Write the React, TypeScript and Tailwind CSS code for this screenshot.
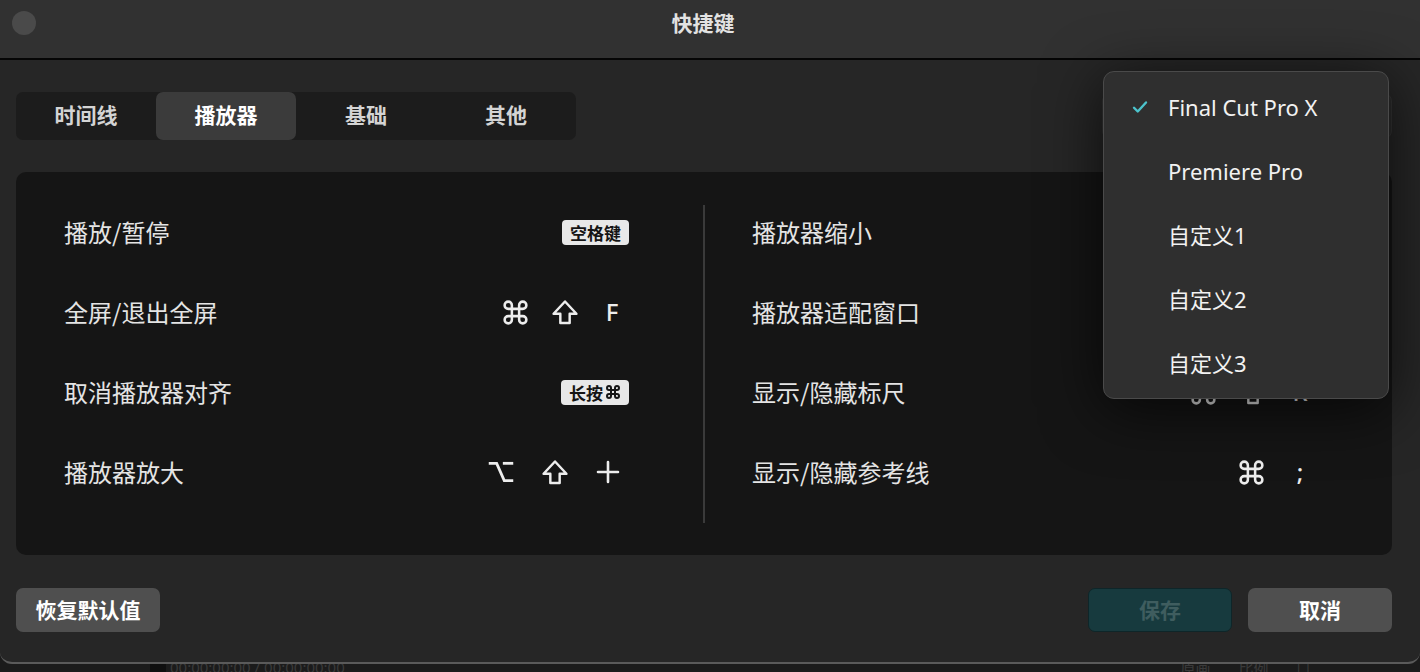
import React from "react";

const CJK = '"Noto Sans CJK SC", "Noto Sans", sans-serif';
const LAT = '"Noto Sans", "Noto Sans CJK SC", sans-serif';

function Cmd({ size = 29, sw = 2.1 }: { size?: number; sw?: number }) {
  return (
    <svg width={size} height={size} viewBox="0 0 24 24" fill="none" stroke="currentColor" strokeWidth={sw} strokeLinecap="round" strokeLinejoin="round">
      <path d="M15 6v12a3 3 0 1 0 3-3H6a3 3 0 1 0 3 3V6a3 3 0 1 0-3 3h12a3 3 0 1 0-3-3" />
    </svg>
  );
}
function Shift() {
  return (
    <svg width={28} height={28} viewBox="0 0 24 24" fill="none" stroke="currentColor" strokeWidth={2.1} strokeLinejoin="round">
      <path d="M8 21.5v-8H2.2L12 3l9.8 10.5H16v8H8z" />
    </svg>
  );
}
function Opt() {
  return (
    <svg width={26} height={26} viewBox="0 0 24 24" fill="none" stroke="currentColor" strokeWidth={2.6} strokeLinecap="square">
      <path d="M2 4h6l7 16h7" />
      <path d="M15 4h7" />
    </svg>
  );
}
function Plus() {
  return (
    <svg width={24} height={24} viewBox="0 0 24 24" fill="none" stroke="currentColor" strokeWidth={2.6} strokeLinecap="round">
      <path d="M12 2v20M2 12h20" />
    </svg>
  );
}
function Check() {
  return (
    <svg width={18} height={18} viewBox="0 0 24 24" fill="none" stroke="#4cc3cc" strokeWidth={3.2} strokeLinecap="round" strokeLinejoin="round">
      <path d="M4 13l5 5L20 6" />
    </svg>
  );
}

function KeyText({ children }: { children: React.ReactNode }) {
  return (
    <span className="text-[24px] leading-none font-medium w-[24px] text-center" style={{ fontFamily: LAT }}>
      {children}
    </span>
  );
}

function Badge({ children }: { children: React.ReactNode }) {
  return (
    <span
      className="h-[25px] px-[8px] flex items-center gap-[2px] rounded-[4px] bg-[#e8e8e8] text-[#151515] text-[17px] font-bold leading-none"
      style={{ fontFamily: CJK }}
    >
      {children}
    </span>
  );
}

type Row = { label: string; keys: React.ReactNode };

const leftRows: Row[] = [
  { label: "播放/暂停", keys: <Badge>空格键</Badge> },
  {
    label: "全屏/退出全屏",
    keys: (
      <div className="flex items-center gap-[21px] mr-[5px]">
        <Cmd />
        <Shift />
        <KeyText>F</KeyText>
      </div>
    ),
  },
  {
    label: "取消播放器对齐",
    keys: (
      <Badge>
        长按<Cmd size={16} sw={3} />
      </Badge>
    ),
  },
  {
    label: "播放器放大",
    keys: (
      <div className="flex items-center gap-[27px] mr-[9px]">
        <Opt />
        <Shift />
        <Plus />
      </div>
    ),
  },
];

const rightRows: Row[] = [
  {
    label: "播放器缩小",
    keys: (
      <div className="flex items-center gap-[24px]">
        <Opt />
        <KeyText>-</KeyText>
      </div>
    ),
  },
  {
    label: "播放器适配窗口",
    keys: (
      <div className="flex items-center gap-[22px]">
        <Shift />
        <KeyText>Z</KeyText>
      </div>
    ),
  },
  {
    label: "显示/隐藏标尺",
    keys: (
      <div className="flex items-center gap-[21px]">
        <Cmd />
        <Shift />
        <KeyText>R</KeyText>
      </div>
    ),
  },
  {
    label: "显示/隐藏参考线",
    keys: (
      <div className="flex items-center gap-[22px]">
        <Cmd />
        <KeyText>;</KeyText>
      </div>
    ),
  },
];

function Column({ rows, className }: { rows: Row[]; className: string }) {
  return (
    <div className={"flex flex-col " + className}>
      {rows.map((r) => (
        <div key={r.label} className="h-[80px] flex items-center justify-between">
          <span className="text-[24px] leading-none text-[#e4e4e4]" style={{ fontFamily: CJK }}>
            {r.label}
          </span>
          <div className="text-[#ededed] flex items-center">{r.keys}</div>
        </div>
      ))}
    </div>
  );
}

export default function App() {
  const tabs = ["时间线", "播放器", "基础", "其他"];
  const menu = ["Final Cut Pro X", "Premiere Pro", "自定义1", "自定义2", "自定义3"];
  return (
    <div className="w-[1420px] h-[672px] bg-[#1b1b1b] flex flex-col overflow-hidden relative" style={{ fontFamily: CJK }}>
      {/* Dialog */}
      <div className="h-[664px] shrink-0 flex flex-col rounded-b-[12px] border-b-[2px] border-[#5a5a5a] bg-[#262626] overflow-hidden">
        {/* Title bar */}
        <div className="h-[60px] shrink-0 bg-[#313131] border-b-[2px] border-[#050505] relative flex items-center justify-center pr-[14px]">
          <div className="absolute left-[12px] top-[11px] w-[24px] h-[24px] rounded-full bg-[#4a4a4a]" />
          <span className="text-[21px] font-bold text-[#e2e2e2] -mt-[13px]">快捷键</span>
        </div>

        {/* Body */}
        <div className="flex-1 flex flex-col pl-[16px] pr-[28px] pt-[32px]">
          <div className="flex items-center justify-between">
            <div className="flex h-[48px] rounded-[7px] bg-[#1c1c1c]">
              {tabs.map((t, i) => (
                <div
                  key={t}
                  className={
                    "w-[140px] flex items-center justify-center rounded-[7px] text-[21px] font-bold pb-[3px] " +
                    (i === 1 ? "bg-[#3b3b3b] text-white" : "text-[#d4d4d4]")
                  }
                >
                  {t}
                </div>
              ))}
            </div>
            <div className="w-[290px] h-[46px] rounded-[8px] bg-[#2b2b2b] border border-[#343434]" />
          </div>

          <div className="mt-[32px] h-[383px] rounded-[10px] bg-[#151515] flex items-start pt-[20px]">
            <Column rows={leftRows} className="w-[687px] pl-[48px] pr-[74px]" />
            <div className="w-[2px] h-[318px] mt-[13px] bg-[#3a3a3a]" />
            <Column rows={rightRows} className="flex-1 pl-[47px] pr-[80px]" />
          </div>

          <div className="mt-[33px] flex items-center justify-between">
            <button className="w-[144px] h-[44px] rounded-[7px] bg-[#4f4f4f] text-white text-[21px] font-bold">恢复默认值</button>
            <div className="flex gap-[16px]">
              <button className="w-[144px] h-[44px] rounded-[7px] bg-[#173a3e] border border-[#0e2629] text-[#3f5d5f] text-[21px] font-bold">保存</button>
              <button className="w-[144px] h-[44px] rounded-[7px] bg-[#4f4f4f] text-white text-[21px] font-bold">取消</button>
            </div>
          </div>
        </div>
      </div>

      {/* Underlying app strip */}
      <div className="flex-1 flex items-start overflow-hidden">
        <div className="ml-[150px] w-[16px] h-full bg-[#0f0f0f]" />
        <span className="ml-[4px] -mt-[4px] text-[15px] text-[#3a3a3a] leading-none" style={{ fontFamily: LAT }}>
          00:00:00:00 / 00:00:00:00
        </span>
        <div className="ml-auto mr-[110px] flex gap-[28px] -mt-[4px] text-[15px] text-[#3a3a3a] leading-none">
          <span>原画</span>
          <span>比例</span>
          <span>[ ]</span>
        </div>
      </div>

      {/* Dropdown menu */}
      <div className="absolute left-[1103px] top-[71px] w-[286px] rounded-[11px] bg-[#2f2f2f] border border-[#4a4a4a] py-[3px] shadow-[0_10px_60px_rgba(0,0,0,0.7)]">
        {menu.map((m, i) => (
          <div key={m} className="h-[64px] flex items-center">
            <div className="w-[64px] flex justify-center pl-[7px]">{i === 0 ? <Check /> : null}</div>
            <span className="text-[22px] text-[#f2f2f2] leading-none" style={{ fontFamily: LAT }}>
              {m}
            </span>
          </div>
        ))}
      </div>
    </div>
  );
}
